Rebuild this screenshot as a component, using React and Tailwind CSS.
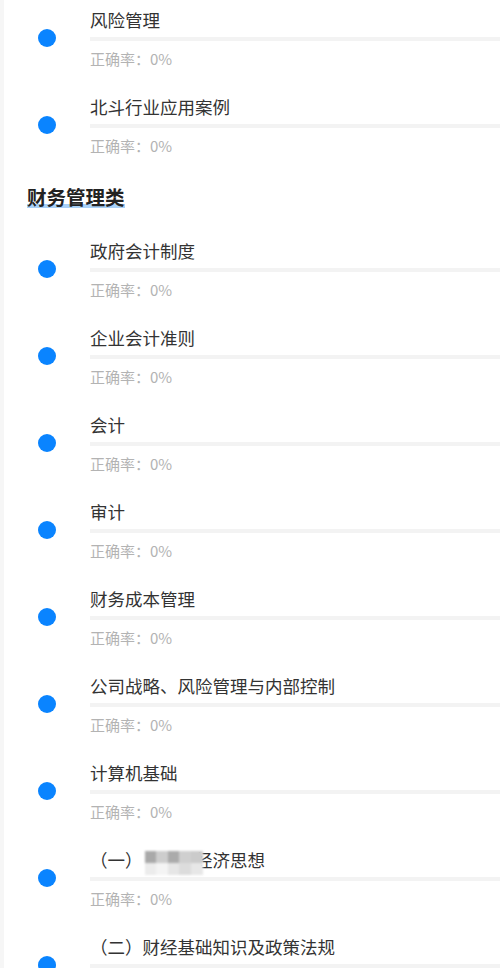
import React from "react";

const font = { fontFamily: '"Noto Sans CJK SC", "Noto Sans", sans-serif' };

function Mosaic() {
  const top = ["#a9a9a9", "#cdcdcd", "#ababab", "#cfcfcf", "#cbcbcb"];
  const bot = ["#ececec", "#f4f4f4", "#e6e6e6", "#dcdcdc", "#e7e7e7"];
  return (
    <span className="relative inline-block w-[3em] h-[1em] align-middle">
      <span className="absolute left-[2px] top-[-3px] w-[58px] h-[24px] grid grid-cols-5 grid-rows-2 blur-[1px]">
        {top.map((c, i) => (
          <span key={"t" + i} className="block" style={{ background: c }} />
        ))}
        {bot.map((c, i) => (
          <span key={"b" + i} className="block" style={{ background: c }} />
        ))}
      </span>
    </span>
  );
}

function Item({ title }) {
  return (
    <div className="flex h-[87px]">
      <div className="w-[90px] shrink-0">
        <div className="ml-[38px] mt-[28.5px] w-[18px] h-[18px] rounded-full bg-[#0a84ff]" />
      </div>
      <div className="flex-1 pt-[7px]">
        <div className="text-[17.5px] leading-[26px] text-[#333333] whitespace-nowrap">{title}</div>
        <div className="mt-[4px] h-[4px] bg-[#f3f3f3]" />
        <div className="mt-[7px] text-[15px] leading-[22px] text-[#b3b3b3]">正确率：0%</div>
      </div>
    </div>
  );
}

export default function App() {
  return (
    <div className="w-[500px] h-[968px] overflow-hidden bg-white flex" style={font}>
      <div className="w-[4px] shrink-0 bg-[#f6f6f6]" />
      <div className="flex-1 -ml-[4px]">
        <Item title="风险管理" />
        <Item title="北斗行业应用案例" />
        <div className="h-[57px] pt-[9px] pl-[27px]">
          <div className="inline-flex flex-col">
            <div className="relative z-10 text-[19.5px] leading-[28px] font-bold text-[#222222]">财务管理类</div>
            <div className="-mt-[7px] h-[4px] bg-[#a8d0f7]" />
          </div>
        </div>
        <Item title="政府会计制度" />
        <Item title="企业会计准则" />
        <Item title="会计" />
        <Item title="审计" />
        <Item title="财务成本管理" />
        <Item title="公司战略、风险管理与内部控制" />
        <Item title="计算机基础" />
        <Item
          title={
            <>
              （一）
              <Mosaic />
              经济思想
            </>
          }
        />
        <Item title="（二）财经基础知识及政策法规" />
      </div>
    </div>
  );
}
